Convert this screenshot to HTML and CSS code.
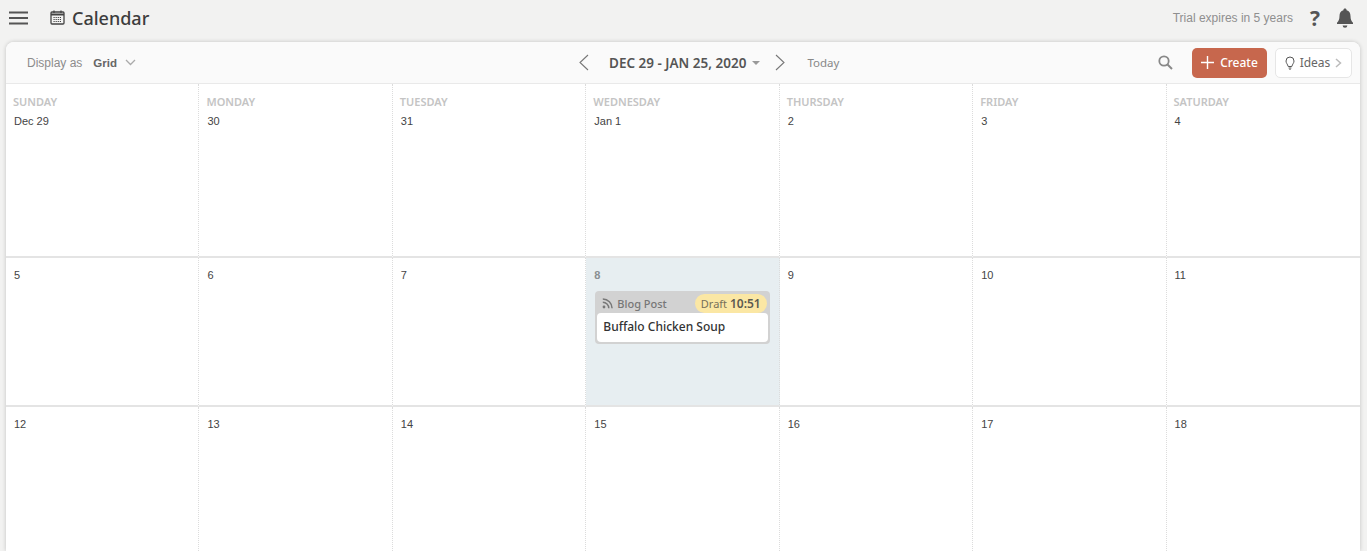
FILE: index.html
```html
<!DOCTYPE html>
<html lang="en">
<head>
    <meta charset="UTF-8">
    <title>Calendar</title>
    <link rel="stylesheet" href="styles.css">
</head>
<body>
    <header class="topbar">
        <div class="topbar-left">
            <svg class="menu-icon" width="19" height="14" viewBox="0 0 19 14"><path d="M0 1.5h19M0 7h19M0 12.500h19" stroke="#555" stroke-width="2.200" fill="none"/></svg>
            <svg class="cal-icon" width="15" height="15" viewBox="0 0 15 15"><rect x="1" y="2" width="13" height="12" rx="1" fill="#f3f3f2" stroke="#444" stroke-width="1.300"/><path d="M1 4.500h13" stroke="#444" stroke-width="2"/><path d="M4 0.500v2.500M11 0.500v2.500" stroke="#444" stroke-width="1.300"/><path d="M3.500 7.500h8M3.500 9.500h8M3.500 11.500h8" stroke="#444" stroke-width="1.200" stroke-dasharray="1.200 .9"/></svg>
            <h1 class="page-title">Calendar</h1>
        </div>
        <div class="topbar-right">
            <span class="trial">Trial expires in 5 years</span>
            <span class="help">?</span>
            <svg class="bell" width="18" height="20" viewBox="0 0 18 20"><path d="M9 0.500c1 0 1.600.7 1.600 1.700 2.700.7 3.900 3 3.900 5.800 0 3.500.9 5.200 2.500 6.800v1.200H1V14.800c1.600-1.600 2.500-3.300 2.500-6.800 0-2.800 1.200-5.100 3.900-5.800C7.400 1.200 8 .5 9 .5z" fill="#555"/><path d="M6.600 17.500h4.800A2.400 2.400 0 0 1 9 19.700a2.400 2.400 0 0 1-2.400-2.200z" fill="#555"/></svg>
        </div>
    </header>

    <main class="card">
        <div class="toolbar">
            <div class="display-as">
                <span class="display-label">Display as</span>
                <span class="display-value">Grid</span>
                <svg width="11" height="7" viewBox="0 0 11 7"><path d="M1 1l4.500 4.500L10 1" stroke="#aaa" stroke-width="1.300" fill="none"/></svg>
            </div>
            <div class="range">
                <svg class="range-arrow" width="11" height="17" viewBox="0 0 11 17"><path d="M10 1L2 8.500 10 16" stroke="#777" stroke-width="1.100" fill="none"/></svg>
                <span class="range-text">DEC 29 - JAN 25, 2020</span>
                <span class="range-caret"></span>
                <svg class="range-arrow next" width="11" height="17" viewBox="0 0 11 17"><path d="M1 1l8 7.500L1 16" stroke="#777" stroke-width="1.100" fill="none"/></svg>
                <span class="today">Today</span>
            </div>
            <div class="actions">
                <svg class="search" width="15" height="15" viewBox="0 0 15 15"><circle cx="6" cy="6" r="4.700" stroke="#888" stroke-width="1.800" fill="none"/><path d="M9.500 9.500l4.500 4.500" stroke="#888" stroke-width="2"/></svg>
                <button class="create-btn"><svg width="13" height="13" viewBox="0 0 13 13"><path d="M6.500 0v13M0 6.500h13" stroke="#fff" stroke-width="1.400"/></svg>Create</button>
                <button class="ideas-btn">
                    <svg width="10" height="14" viewBox="0 0 10 14"><path d="M5 1a4 4 0 0 0-4 4c0 2 1.500 3 2.200 5.500h3.600C7.500 8 9 7 9 5a4 4 0 0 0-4-4z" fill="none" stroke="#555" stroke-width="1"/><path d="M3.600 12h2.800M4.300 13.300h1.400" stroke="#555" stroke-width="1"/></svg>
                    Ideas
                    <svg width="7" height="10" viewBox="0 0 7 10"><path d="M1 1l4.500 4L1 9" stroke="#bbb" stroke-width="1.500" fill="none"/></svg>
                </button>
            </div>
        </div>

        <div class="cal-grid">
            <div class="day"><div class="weekday">SUNDAY</div><div class="date">Dec 29</div></div>
            <div class="day"><div class="weekday">MONDAY</div><div class="date">30</div></div>
            <div class="day"><div class="weekday">TUESDAY</div><div class="date">31</div></div>
            <div class="day"><div class="weekday">WEDNESDAY</div><div class="date">Jan 1</div></div>
            <div class="day"><div class="weekday">THURSDAY</div><div class="date">2</div></div>
            <div class="day"><div class="weekday">FRIDAY</div><div class="date">3</div></div>
            <div class="day"><div class="weekday">SATURDAY</div><div class="date">4</div></div>

            <div class="day"><div class="date">5</div></div>
            <div class="day"><div class="date">6</div></div>
            <div class="day"><div class="date">7</div></div>
            <div class="day today-cell">
                <div class="date">8</div>
                <div class="post">
                    <div class="post-head">
                        <svg width="11" height="11" viewBox="0 0 11 11"><circle cx="2" cy="9" r="1.400" fill="#777"/><path d="M.8 4.300a6 6 0 0 1 6 6M.8 1a9.300 9.300 0 0 1 9.300 9.300" stroke="#777" stroke-width="1.500" fill="none"/></svg>
                        <span class="post-type">Blog Post</span>
                        <span class="post-status">Draft <b>10:51</b></span>
                    </div>
                    <div class="post-title">Buffalo Chicken Soup</div>
                </div>
            </div>
            <div class="day"><div class="date">9</div></div>
            <div class="day"><div class="date">10</div></div>
            <div class="day"><div class="date">11</div></div>

            <div class="day"><div class="date">12</div></div>
            <div class="day"><div class="date">13</div></div>
            <div class="day"><div class="date">14</div></div>
            <div class="day"><div class="date">15</div></div>
            <div class="day"><div class="date">16</div></div>
            <div class="day"><div class="date">17</div></div>
            <div class="day"><div class="date">18</div></div>
        </div>
    </main>
</body>
</html>
```

FILE: styles.css
```css
html, body {
    height: 100%;
}

body {
    margin: 0;
    height: 551px;
    overflow: hidden;
    display: flex;
    flex-direction: column;
    background-color: #f2f2f1;
    font-family: "Liberation Sans", Arial, sans-serif;
    color: #444;
}

.topbar {
    height: 42px;
    flex: none;
    display: flex;
    justify-content: space-between;
    align-items: center;
    padding: 0 13px 7px 9px;
    box-sizing: border-box;
}

.topbar-left,
.topbar-right {
    display: flex;
    align-items: center;
}

.cal-icon {
    margin-left: 22px;
}

.page-title {
    margin: 0 0 0 7px;
    font-family: "Noto Sans", sans-serif;
    font-size: 18px;
    font-weight: 500;
    color: #3d3d3d;
}

.trial {
    font-size: 12px;
    color: #8f8f8f;
}

.help {
    margin-left: 17px;
    font-family: "Open Sans", sans-serif;
    font-size: 21px;
    font-weight: 700;
    line-height: 20px;
    color: #555;
}

.bell {
    margin-left: 16px;
}

.card {
    flex: 1;
    margin: 0 7px 0 6px;
    background: #fff;
    border-radius: 8px 8px 0 0;
    box-shadow: 0 0 4px rgba(0,0,0,0.2);
    display: flex;
    flex-direction: column;
    min-height: 0;
}

.toolbar {
    position: relative;
    height: 42px;
    flex: none;
    box-sizing: border-box;
    display: flex;
    justify-content: space-between;
    align-items: center;
    padding: 0 8px 0 21px;
    background: #fafafa;
    border-bottom: 1px solid #e9e9e9;
    border-radius: 8px 8px 0 0;
}

.display-as {
    display: flex;
    align-items: center;
    font-size: 12px;
}

.display-label {
    color: #8c8c8c;
}

.display-value {
    margin: 0 8px 0 11px;
    font-weight: 700;
    color: #666;
    font-size: 11.500px;
}

.range {
    position: absolute;
    left: 572px;
    top: 0;
    height: 41px;
    display: flex;
    align-items: center;
}

.range-text {
    margin-left: 20px;
    font-family: "Noto Sans", sans-serif;
    font-size: 13.500px;
    font-weight: 600;
    color: #555;
}

.range-caret {
    margin-left: 6px;
    border-left: 4px solid transparent;
    border-right: 4px solid transparent;
    border-top: 4px solid #999;
}

.range-arrow.next {
    margin-left: 15px;
}

.today {
    margin-left: 21px;
    font-family: "Noto Sans", sans-serif;
    font-size: 11.500px;
    color: #888;
}

.actions {
    display: flex;
    align-items: center;
}

.search {
    margin-right: 19px;
}

.create-btn {
    width: 75px;
    height: 30px;
    display: flex;
    align-items: center;
    justify-content: center;
    gap: 6px;
    padding: 0;
    border: none;
    border-radius: 5px;
    background-color: #c7674d;
    color: white;
    font-family: "Noto Sans", sans-serif;
    font-size: 12px;
    font-weight: 500;
}

.ideas-btn {
    width: 77px;
    height: 30px;
    margin-left: 8px;
    display: flex;
    align-items: center;
    justify-content: center;
    gap: 5px;
    padding: 0;
    border: 1px solid #e6e6e6;
    border-radius: 5px;
    background: #fff;
    color: #666;
    font-family: "Noto Sans", sans-serif;
    font-size: 12px;
}

.cal-grid {
    flex: 1;
    min-height: 0;
    display: grid;
    grid-template-columns: repeat(7, 1fr);
    grid-template-rows: 174px 149px 1fr;
}

.day {
    box-sizing: border-box;
    padding: 11px 8px 0 8px;
    border-right: 1px dotted #dcdcdc;
    border-bottom: 2px solid #e4e4e4;
    min-width: 0;
}

.day:nth-child(7n) {
    border-right: none;
}

.day:nth-child(n+15) {
    border-bottom: none;
}

.weekday {
    margin: 0 0 7px -1px;
    font-family: "Noto Sans", sans-serif;
    font-size: 11px;
    font-weight: 600;
    line-height: 13px;
    color: #c4c4c4;
}

.date {
    font-size: 11px;
    line-height: 13px;
    color: #444;
}

.today-cell {
    background-color: #e7eef1;
}

.today-cell .date {
    color: #8a8f92;
    font-weight: 700;
}

.post {
    margin: 9px 1px 0 1px;
    padding: 2px;
    background: #d2d2d2;
    border-radius: 4px;
}

.post-head {
    height: 20px;
    display: flex;
    align-items: center;
    padding: 0 1px 0 5px;
    font-family: "Noto Sans", sans-serif;
    font-size: 11px;
}

.post-type {
    margin-left: 4px;
    font-weight: 500;
    color: #777;
}

.post-status {
    margin-left: auto;
    padding: 0 6px;
    height: 19px;
    line-height: 19px;
    background: #fbe7a4;
    border-radius: 10px;
    color: #77705a;
    white-space: nowrap;
}

.post-status b {
    font-size: 12px;
    font-weight: 600;
    color: #5c5a50;
}

.post-title {
    height: 29px;
    line-height: 28px;
    padding-left: 6px;
    background: #fff;
    border-radius: 4px;
    font-family: "Noto Sans", sans-serif;
    font-size: 12px;
    font-weight: 500;
    color: #333;
}
```
